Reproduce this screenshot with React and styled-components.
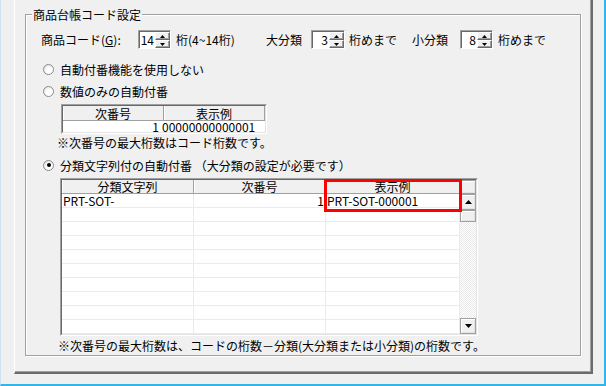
import styled, { createGlobalStyle } from "styled-components";

const GlobalStyle = createGlobalStyle`
  html, body {
    margin: 0;
    padding: 0;
    background: #f0f0f0;
  }
  body {
    font-family: "Noto Sans CJK JP", "Noto Sans", sans-serif;
    font-size: 12px;
    color: #000;
  }
`;

const columns = [
  { title: "分類文字列", w: 132, align: "left" },
  { title: "次番号", w: 132, align: "right" },
  { title: "表示例", w: 134, align: "left" },
];

const rows = [
  ["PRT-SOT-", "1", "PRT-SOT-000001"],
  ...Array.from({ length: 9 }, () => ["", "", ""]),
];

function Arrow({ down, size = 5 }) {
  const h = Math.ceil(size / 2);
  return (
    <svg width={size} height={h} viewBox={`0 0 ${size} ${h}`}>
      <path
        d={down ? `M0 0H${size}L${size / 2} ${h}Z` : `M${size / 2} 0L${size} ${h}H0Z`}
        fill="#000"
      />
    </svg>
  );
}

function SpinBox({ value, w }) {
  return (
    <Spin $w={w}>
      <SpinValue>{value}</SpinValue>
      <SpinButtons>
        <SpinButton>
          <Arrow />
        </SpinButton>
        <SpinButton>
          <Arrow down />
        </SpinButton>
      </SpinButtons>
    </Spin>
  );
}

function Radio({ checked, children, mt }) {
  return (
    <RadioRow $mt={mt}>
      <RadioCircle $checked={checked} />
      <span>{children}</span>
    </RadioRow>
  );
}

export default function App() {
  return (
    <>
      <GlobalStyle />
      <Window>
        <Panel>
          <GroupBox>
            <Legend>商品台帳コード設定</Legend>
            <Body>
              <FieldRow>
                <Caption $w={97}>
                  商品コード(<u>G</u>):
                </Caption>
                <SpinBox value="14" w={33} />
                <Caption $ml={5} $w={90}>
                  桁(4~14桁)
                </Caption>
                <Caption $w={45}>大分類</Caption>
                <SpinBox value="3" w={34} />
                <Caption $ml={4} $w={63}>
                  桁めまで
                </Caption>
                <Caption $w={48}>小分類</Caption>
                <SpinBox value="8" w={33} />
                <Caption $ml={5}>桁めまで</Caption>
              </FieldRow>

              <Radio mt={12}>自動付番機能を使用しない</Radio>
              <Radio mt={6}>数値のみの自動付番</Radio>

              <Sunken $mt={5} $ml={35} $w={206}>
                <SunkenInner>
                  <HeadRow $h={15}>
                    <HeadCell $w={101}>次番号</HeadCell>
                    <HeadCell $w={101}>表示例</HeadCell>
                  </HeadRow>
                  <DataRow>
                    <DataCell $w={99} $align="right">
                      1
                    </DataCell>
                    <DataCell $w={103}>00000000000001</DataCell>
                  </DataRow>
                </SunkenInner>
              </Sunken>

              <Note $mt={2} $ml={31}>
                ※次番号の最大桁数はコード桁数です。
              </Note>

              <Radio mt={7} checked>
                分類文字列付の自動付番 （大分類の設定が必要です）
              </Radio>

              <Sunken $mt={5} $ml={34} $w={418}>
                <SunkenInner>
                  <GridLayout>
                    <GridMain>
                      <HeadRow $h={14}>
                        {columns.map((c) => (
                          <HeadCell key={c.title} $w={c.w}>
                            {c.title}
                          </HeadCell>
                        ))}
                      </HeadRow>
                      {rows.map((r, i) => (
                        <GridRow key={i}>
                          {r.map((v, j) => (
                            <GridCell key={j} $w={columns[j].w} $align={columns[j].align}>
                              {v}
                            </GridCell>
                          ))}
                        </GridRow>
                      ))}
                    </GridMain>
                    <ScrollBar>
                      <ScrollCorner />
                      <ScrollButton $h={16}>
                        <Arrow size={7} />
                      </ScrollButton>
                      <ScrollButton $h={12} />
                      <ScrollTrack />
                      <ScrollButton $h={16}>
                        <Arrow size={7} down />
                      </ScrollButton>
                    </ScrollBar>
                  </GridLayout>
                </SunkenInner>
                <Highlight />
              </Sunken>

              <Note $mt={3} $ml={32}>
                ※次番号の最大桁数は、コードの桁数－分類(大分類または小分類)の桁数です。
              </Note>
            </Body>
          </GroupBox>
        </Panel>
      </Window>
    </>
  );
}

const Window = styled.div`
  width: 606px;
  height: 386px;
  box-sizing: border-box;
  border-left: 1px solid #cde3f3;
  border-right: 2px solid #33b5e8;
  border-bottom: 2px solid #33b5e8;
  background: #f0f0f0;
  overflow: hidden;
`;

const Panel = styled.div`
  margin-left: 13px;
  width: 579px;
  height: 374px;
  box-sizing: border-box;
  border-left: 1px solid #fff;
  border-right: 2px solid #6b6b6b;
  border-bottom: 2px solid #6b6b6b;
  box-shadow: inset -1px -1px 0 #a0a0a0;
  padding-left: 10px;
  display: flow-root;
`;

const GroupBox = styled.fieldset`
  margin: 7px 0 0 0;
  padding: 0;
  min-width: 0;
  width: 556px;
  height: 349px;
  box-sizing: border-box;
  border: 1px solid #a0a0a0;
  box-shadow: 1px 1px 0 #fff, inset 1px 1px 0 #fff;
`;

const Legend = styled.legend`
  margin-left: 6px;
  padding: 0 1px;
  height: 15px;
  line-height: 15px;
  background: #f0f0f0;
`;

const Body = styled.div`
  display: flex;
  flex-direction: column;
  align-items: flex-start;
`;

const FieldRow = styled.div`
  display: flex;
  align-items: center;
  height: 19px;
  margin-top: 8px;
  padding-left: 15px;
`;

const Caption = styled.span`
  flex: none;
  width: ${(p) => (p.$w ? `${p.$w}px` : "auto")};
  margin-left: ${(p) => p.$ml || 0}px;
  white-space: nowrap;
  line-height: 19px;
`;

const Spin = styled.div`
  flex: none;
  display: flex;
  width: ${(p) => p.$w}px;
  height: 19px;
  box-sizing: border-box;
  border: 1px solid;
  border-color: #a0a0a0 #fff #fff #a0a0a0;
  box-shadow: inset 1px 1px 0 #696969;
  background: #fff;
  padding: 1px 0 0 1px;
`;

const SpinValue = styled.span`
  flex: 1;
  text-align: right;
  padding-right: 1px;
  line-height: 16px;
`;

const SpinButtons = styled.div`
  display: flex;
  flex-direction: column;
  width: 15px;
`;

const SpinButton = styled.div`
  flex: 1;
  display: flex;
  align-items: center;
  justify-content: center;
  box-sizing: border-box;
  background: #f0f0f0;
  border: 1px solid;
  border-color: #fff #696969 #696969 #fff;
  box-shadow: inset -1px -1px 0 #a0a0a0;
`;

const RadioRow = styled.label`
  display: flex;
  align-items: center;
  gap: 6px;
  height: 16px;
  margin-top: ${(p) => p.$mt}px;
  padding-left: 17px;
  white-space: nowrap;
`;

const RadioCircle = styled.span`
  flex: none;
  width: 11px;
  height: 11px;
  box-sizing: border-box;
  border-radius: 50%;
  border: 1px solid #8a8a8a;
  background: radial-gradient(circle at 65% 65%, #fff 35%, #dcdcdc 100%);
  display: flex;
  align-items: center;
  justify-content: center;

  &::after {
    content: "";
    display: ${(p) => (p.$checked ? "block" : "none")};
    width: 4px;
    height: 4px;
    border-radius: 50%;
    background: #000;
  }
`;

const Sunken = styled.div`
  position: relative;
  flex: none;
  margin: ${(p) => p.$mt}px 0 0 ${(p) => p.$ml}px;
  width: ${(p) => p.$w}px;
  box-sizing: border-box;
  border: 1px solid;
  border-color: #a0a0a0 #fff #fff #a0a0a0;
`;

const SunkenInner = styled.div`
  border: 1px solid;
  border-color: #696969 #e3e3e3 #e3e3e3 #696969;
  background: #fff;
`;

const HeadRow = styled.div`
  display: flex;
  height: ${(p) => p.$h}px;
  box-sizing: border-box;
  border-bottom: 1px solid #a0a0a0;
  background: #f0f0f0;
`;

const HeadCell = styled.div`
  flex: none;
  display: flex;
  align-items: center;
  justify-content: center;
  width: ${(p) => p.$w}px;
  box-sizing: border-box;
  border-right: 1px solid #a0a0a0;
  box-shadow: inset 1px 0 0 #fff;
  white-space: nowrap;
`;

const DataRow = styled.div`
  display: flex;
  height: 11px;
  align-items: center;
`;

const DataCell = styled.div`
  flex: none;
  width: ${(p) => p.$w}px;
  box-sizing: border-box;
  text-align: ${(p) => p.$align || "left"};
  padding-right: ${(p) => (p.$align === "right" ? 3 : 0)}px;
  white-space: nowrap;
`;

const Note = styled.div`
  margin: ${(p) => p.$mt}px 0 0 ${(p) => p.$ml}px;
  height: 14px;
  line-height: 14px;
  white-space: nowrap;
`;

const GridLayout = styled.div`
  display: flex;
`;

const GridMain = styled.div`
  width: 398px;
`;

const GridRow = styled.div`
  display: flex;
  height: 14px;
`;

const GridCell = styled.div`
  flex: none;
  display: flex;
  align-items: center;
  justify-content: ${(p) => (p.$align === "right" ? "flex-end" : "flex-start")};
  width: ${(p) => p.$w}px;
  box-sizing: border-box;
  border-right: 1px solid #ebebeb;
  border-bottom: 1px solid #ebebeb;
  padding: 0 1px;
  white-space: nowrap;
`;

const ScrollBar = styled.div`
  display: flex;
  flex-direction: column;
  width: 16px;
  background: #f0f0f0;
`;

const raised = `
  box-sizing: border-box;
  background: #f0f0f0;
  border: 1px solid #a0a0a0;
  box-shadow: inset 1px 1px 0 #fff, inset -1px -1px 0 #e3e3e3;
`;

const ScrollCorner = styled.div`
  ${raised}
  height: 14px;
`;

const ScrollButton = styled.div`
  ${raised}
  height: ${(p) => p.$h}px;
  display: flex;
  align-items: center;
  justify-content: center;
`;

const ScrollTrack = styled.div`
  flex: 1;
  background: repeating-conic-gradient(#ffffff 0 25%, #e9e9e9 0 50%) 0 0 / 2px 2px;
`;

const Highlight = styled.div`
  position: absolute;
  left: 263px;
  top: 0;
  width: 138px;
  height: 33px;
  box-sizing: border-box;
  border: 3px solid #ff0000;
  pointer-events: none;
`;
